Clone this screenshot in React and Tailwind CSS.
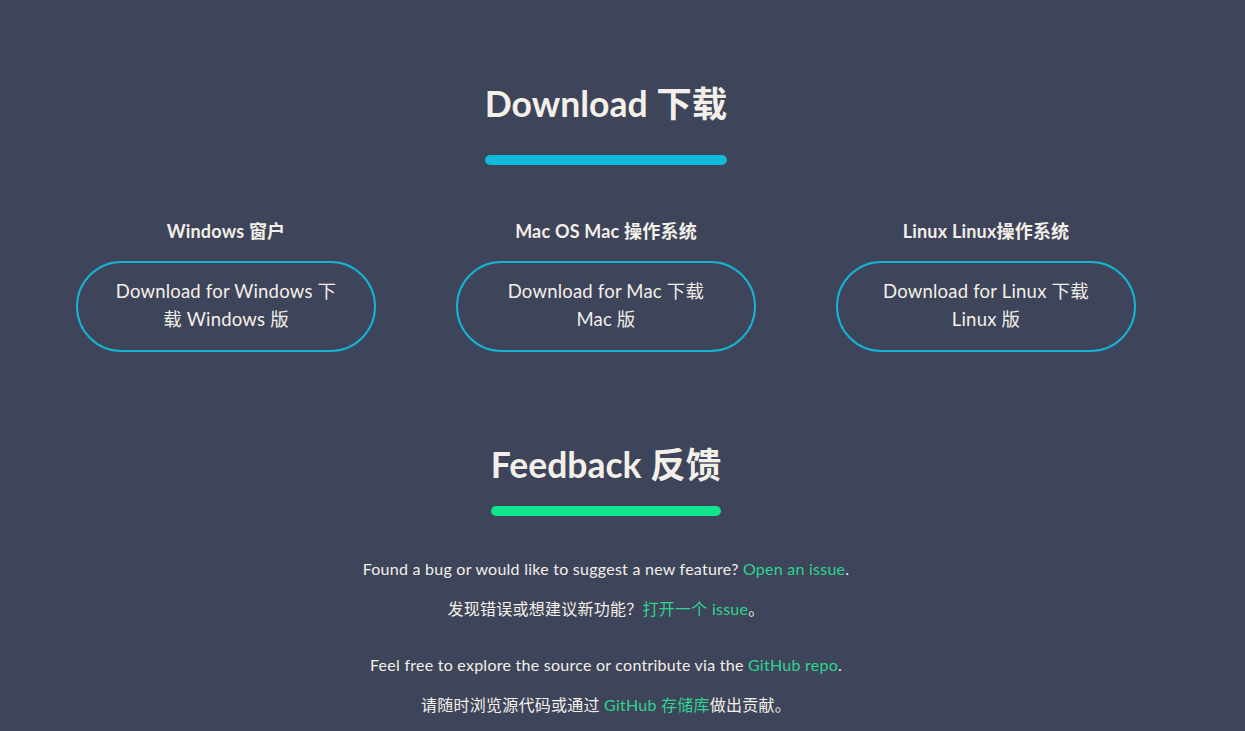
const platforms = [
  { title: "Windows 窗户", label: "Download for Windows 下载 Windows 版" },
  { title: "Mac OS Mac 操作系统", label: "Download for Mac 下载 Mac 版" },
  { title: "Linux Linux操作系统", label: "Download for Linux 下载 Linux 版" },
];

function SectionTitle({ children, bar, gap }) {
  return (
    <div className="flex justify-center">
      <div className="inline-flex flex-col items-stretch">
        <h2 className="text-[35.5px] font-bold leading-[44px] text-[#f3efe9] text-center">{children}</h2>
        <div className={`h-[10px] rounded-full ${gap} ${bar}`} />
      </div>
    </div>
  );
}

export default function App() {
  return (
    <div
      className="min-h-screen bg-[#3e4459] text-[#f3efe9] pr-[33px]"
      style={{ fontFamily: 'Lato, "Noto Sans CJK SC", sans-serif' }}
    >
      <section className="pt-[82px]">
        <SectionTitle bar="bg-[#0fb9d9]" gap="mt-[29px]">Download 下载</SectionTitle>

        <div className="mt-[53px] mx-auto w-[1140px] grid grid-cols-3">
          {platforms.map((p) => (
            <div key={p.title} className="flex flex-col items-center">
              <h3 className="text-[18px] font-bold leading-[26px] tracking-[0.2px]">{p.title}</h3>
              <a
                href="#"
                className="mt-[17px] w-[300px] h-[91px] rounded-full border-2 border-[#15b3d2] flex items-center justify-center px-[34px] pb-[4px] text-center text-[18.5px] leading-[28px] tracking-[0.2px]"
              >
                {p.label}
              </a>
            </div>
          ))}
        </div>
      </section>

      <section className="pt-[91px] pb-[20px]">
        <SectionTitle bar="bg-[#0ee58d]" gap="mt-[19px]">Feedback 反馈</SectionTitle>

        <div className="mt-[41px] text-center text-[16px] leading-[24px] tracking-[0.25px]">
          <p>
            Found a bug or would like to suggest a new feature?{" "}
            <a href="#" className="text-[#2ed48f]">Open an issue</a>.
          </p>
          <p className="mt-[16px]">
            发现错误或想建议新功能？<a href="#" className="text-[#2ed48f]">打开一个 issue</a>。
          </p>
          <p className="mt-[32px]">
            Feel free to explore the source or contribute via the{" "}
            <a href="#" className="text-[#2ed48f]">GitHub repo</a>.
          </p>
          <p className="mt-[16px]">
            请随时浏览源代码或通过 <a href="#" className="text-[#2ed48f]">GitHub 存储库</a>做出贡献。
          </p>
        </div>
      </section>
    </div>
  );
}
